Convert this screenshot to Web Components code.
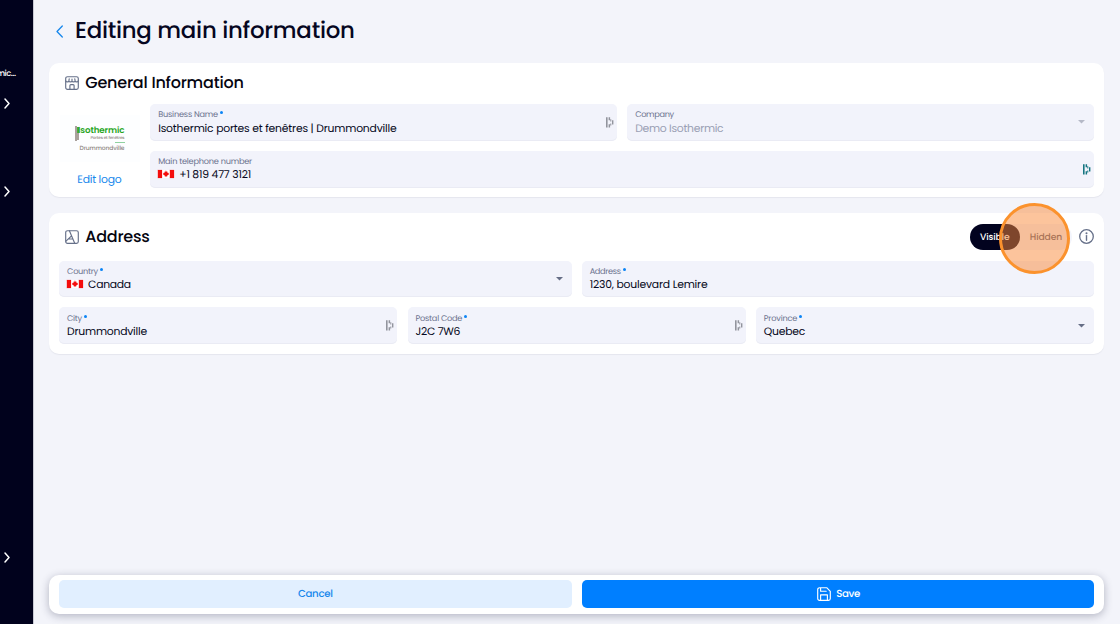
<!DOCTYPE html>
<html lang="en">
<head>
<meta charset="utf-8">
<title>Editing main information</title>
<style>
body{margin:0;width:1120px;height:624px;overflow:hidden;background:#f3f4fa;color:#050621;font-family:Poppins,Inter,"Noto Sans",sans-serif;text-rendering:geometricPrecision}
</style>
</head>
<body>
<app-shell></app-shell>
<script>
const define=(name,html,setup)=>customElements.define(name,class extends HTMLElement{
  connectedCallback(){
    if(this.shadowRoot)return;
    const t=document.createElement('template');
    t.innerHTML=typeof html==='function'?html(this):html;
    this.attachShadow({mode:'open'}).append(t.content.cloneNode(true));
    if(setup)setup(this);
  }
});
const attr=(el,n,d='')=>el.getAttribute(n)??d;

// Text line spaced so that it spans the given width.
define('ui-text',el=>`<style>:host{display:block;white-space:nowrap;font-size:${attr(el,'size')}px;line-height:${attr(el,'lh','14')}px;font-weight:${attr(el,'weight','400')};width:${attr(el,'w')}px}span{display:inline-block}</style><span><slot></slot></span>`,el=>{
  const s=el.shadowRoot.querySelector('span'),w=parseFloat(attr(el,'w')),n=el.textContent.length;
  s.style.letterSpacing=((w-s.getBoundingClientRect().width)/(n-1))+'px';
});

const icons={
 chevron:'<path d="M1 1l4 4.5L1 10" stroke-width="1.5"/>',
 back:'<path d="M6.3 1L1 6.5l5.3 5.5" stroke-width="1.3"/>',
 store:'<rect x=".7" y=".7" width="12.6" height="12.6" rx="1.8"/><path d="M.8 4.8c.3 1.5 2.8 1.5 3.1 0c.3 1.5 2.8 1.5 3.1 0c.3 1.5 2.8 1.5 3.1 0c.3 1.5 2.8 1.5 3.1 0M4.2 2.8l-.3 2M7 3v1.8M9.8 2.8l.3 2M4.9 13.2V9.6q0-1 1-1h2.2q1 0 1 1v3.6"/>',
 map:'<rect x=".7" y=".7" width="12.6" height="12.6" rx="1.8"/><path d="M4.4.8l5.3 12.4M6.5 5.8L1 11.2M7.9 9H3.5"/>',
 info:'<circle cx="7.5" cy="7.5" r="6.8" stroke-width="1.3"/><path d="M7.5 6.6v4.7" stroke-width="1.4"/><circle cx="7.5" cy="4.2" r=".45"/>',
 save:'<path d="M2.5.7h7.2l3.6 3.6v7.2a1.8 1.8 0 0 1-1.8 1.8h-9a1.8 1.8 0 0 1-1.8-1.8v-9A1.8 1.8 0 0 1 2.5.7zM3.6.8v3.4h5.6M3.6 13.2V7.8h6.8v5.4"/>',
 caret:'<path d="M0 0h7L3.5 3.6z" fill="currentColor" stroke="none"/>',
 dash:'<path d="M0 .3h1.6v10.2H0zM2.6 .3h1.5v2.9H2.6zM2.6 7.3h1.5v3.2H2.6zM4.3 2.2h1v2.2h-1zM4.3 6.4h1v2.2h-1zM6 3.3h1.4v4.2H6z" fill="currentColor" stroke="none"/>',
 flag:'<path d="M0 0h16v8H0z" fill="#fff" stroke="none"/><path d="M0 0h4v8H0zM12 0h4v8h-4zM8 .8l.7 1.3.8-.3-.2 1.3 1.5-.2-.4.9.6.4-1.9 1.4.1.6-1-.1V7h-.4v-.9l-1 .1.1-.6L5 4.2l.6-.4-.4-.9 1.5.2-.2-1.3.8.3z" fill="#f40d0d" stroke="#f40d0d" stroke-width=".2"/>'
};
define('ui-icon',el=>{const w=attr(el,'w'),h=attr(el,'h',w);return `<style>:host{display:block;flex:none;width:${w}px;height:${h}px}svg{display:block;overflow:visible}</style><svg width="${w}" height="${h}" viewBox="0 0 ${w} ${h}" fill="none" stroke="currentColor" stroke-width="1.15" stroke-linecap="round" stroke-linejoin="round">${icons[attr(el,'name')]}</svg>`});

define('ui-field',el=>{
 const end=attr(el,'end'),dis=el.hasAttribute('disabled');
 return `<style>
 :host{display:flex;align-items:center;box-sizing:border-box;height:36.6px;min-width:0;border-radius:5px;background:#f2f3fb;box-shadow:inset 0 -1px #eaebf4;padding:0 ${end==='caret'?8.8:3}px 0 7.8px}
 .body{flex:1;min-width:0;padding-bottom:1px}
 .label{display:flex;gap:2px;color:#6b728e;height:12.2px}
 .dot{width:3px;height:3px;border-radius:50%;background:#0b84f5;margin-top:3px}
 .value{display:flex;align-items:center;gap:5px;height:15px;color:${dis?'#9aa0b4':'#050721'}}
 .value ui-icon{margin-top:-1px}
 .end{color:${attr(el,'tone',end==='caret'?'#666e86':'#92949d')}}
 </style><div class="body"><div class="label"><ui-text size="8.2" lh="12" w="${attr(el,'lw')}">${attr(el,'label')}</ui-text>${el.hasAttribute('required')?'<i class="dot"></i>':''}</div>
 <div class="value">${el.hasAttribute('flag')?'<ui-icon name="flag" w="16" h="8"></ui-icon>':''}<ui-text size="10.8" lh="15" w="${attr(el,'vw')}">${attr(el,'value')}</ui-text></div></div>
 ${end?`<ui-icon class="end" name="${end}" w="${end==='caret'?7:8}" h="${end==='caret'?4:11}"></ui-icon>`:''}`});

define('ui-card',`<style>:host{display:block;box-sizing:border-box;background:#fff;border-radius:10px;padding:0 10.3px;box-shadow:0 1px 1px #e5e6ee}
 header{display:flex;align-items:center;box-sizing:border-box;height:var(--head,41.2px);padding:0 0 var(--lift,.4px) 6.2px;color:#667089}
 header ::slotted(ui-text){color:#050510;margin-left:5.8px}
 .tools{margin-left:auto}</style>
 <header><slot name="icon"></slot><slot name="title"></slot><div class="tools"><slot name="tools"></slot></div></header><slot></slot>`);

define('field-row',el=>`<style>:host{display:grid;grid-template-columns:repeat(${attr(el,'cols')},minmax(0,1fr));gap:10.3px}</style><slot></slot>`);

define('business-logo',`<style>:host{display:flex;flex-direction:column;align-items:center;width:80.5px}
 .pic{box-sizing:border-box;width:80px;height:47px;margin-top:10.5px;padding:11px 0 0 15px;background:#fdfeff;display:flex}
 .bars{width:4px;height:15px;display:grid;grid-template-columns:1fr 1fr;margin-right:-1px}.bars i{background:#a9a19c}.bars i+i{height:13px;margin-top:1px;background:linear-gradient(#49ac40 50%,#a9a19c 50%)}
 .words{width:47px;display:flex;flex-direction:column;align-items:flex-end}
 .name{color:#27a51e}.sub,.city{color:#8e8682}.rule{width:10px;height:1px;background:#8fd2a0;margin:.5px 0 3px}
 .edit{color:#1687ec;margin-top:10px}</style>
 <div class="pic"><div class="bars"><i></i><i></i></div><div class="words"><ui-text class="name" size="8.7" lh="10" weight="600" w="46.5">Isothermic</ui-text><ui-text class="sub" size="4.1" lh="6" w="34" weight="500">Portes et fenêtres</ui-text><i class="rule"></i><ui-text class="city" size="6" lh="7" weight="500" w="45">Drummondville</ui-text></div></div>
 <ui-text class="edit" size="10.8" lh="16" w="44.5">Edit logo</ui-text>`);

define('visibility-toggle',`<style>:host{display:flex;align-items:center;gap:7px;color:#667089}
 .pill{position:relative;display:flex;width:102.4px;height:26px;border-radius:13px;background:#f3f5fc}
 .on,.off{box-sizing:border-box;height:26px;padding-top:2px;display:flex;align-items:center;justify-content:center}
 .on{width:50.5px;border-radius:13px;background:#02031f;color:#fff}.off{width:52.5px;color:#565d77}
 .click{position:absolute;left:29px;top:-21px;box-sizing:border-box;width:71px;height:71px;border:3px solid #fb922d;border-radius:50%;background:rgba(249,137,57,.5);z-index:2}</style>
 <div class="pill"><div class="on"><ui-text size="9.2" w="29.5" weight="500">Visible</ui-text></div><div class="off"><ui-text size="9.2" w="32.5" weight="500">Hidden</ui-text></div><i class="click"></i></div><ui-icon name="info" w="15"></ui-icon>`);

define('side-bar',`<style>:host{display:flex;flex-direction:column;box-sizing:border-box;width:33px;height:624px;background:#01021d;color:#fff;overflow:hidden;padding-top:67px;box-shadow:1px 0 #c9cad3}
 ui-icon{margin-left:3.7px}ui-text{margin-left:-3.6px}.a{margin-top:19px}.b{margin-top:77px}.c{margin-top:355px}</style>
 <ui-text size="8.3" lh="12" w="19.6" weight="500">mic…</ui-text><ui-icon class="a" name="chevron" w="6" h="11"></ui-icon><ui-icon class="b" name="chevron" w="6" h="11"></ui-icon><ui-icon class="c" name="chevron" w="6" h="11"></ui-icon>`);

define('action-bar',`<style>:host{display:grid;grid-template-columns:1fr 1fr;gap:10.3px;box-sizing:border-box;height:39px;padding:5.2px 10.3px;border-radius:10px;background:#fff;box-shadow:0 2px 9px rgba(40,42,75,.32)}
 div{display:flex;align-items:center;justify-content:center;gap:5.5px;border-radius:5px}
 .cancel{background:#e1efff;color:#1687ec}.save{background:#007fff;color:#fff;padding-left:1px}</style>
 <div class="cancel"><ui-text size="10.2" w="35" weight="500">Cancel</ui-text></div><div class="save"><ui-icon name="save" w="14"></ui-icon><ui-text size="10.2" w="24" weight="500">Save</ui-text></div>`);

define('app-shell',`<style>:host{display:flex;width:1120px;height:624px}
 main{flex:1;display:flex;flex-direction:column;box-sizing:border-box;padding:0 15.6px 10.4px 16px}
 .head{display:flex;align-items:center;gap:12.4px;height:63px;box-sizing:border-box;padding:0 0 .6px 6.5px}.head ui-icon{color:#1687ec}
 .one{height:134px}.two{height:141px;margin-top:16px;--head:47.5px;--lift:0px}
 .general{display:flex;gap:10.6px}.fields{flex:1;min-width:0}
 .stack{display:grid;gap:10.3px;align-content:start}
 action-bar{margin-top:auto}</style>
 <side-bar></side-bar><main>
 <div class="head"><ui-icon name="back" w="7" h="13"></ui-icon><ui-text size="22.9" lh="32" w="280" weight="500">Editing main information</ui-text></div>
 <ui-card class="one"><ui-icon slot="icon" name="store" w="14"></ui-icon><ui-text slot="title" size="16" lh="22" w="158.5" weight="500">General Information</ui-text>
  <div class="general"><business-logo></business-logo><div class="fields stack">
   <field-row cols="2"><ui-field label="Business Name" lw="60" required value="Isothermic portes et fenêtres | Drummondville" vw="238.5" end="dash"></ui-field><ui-field label="Company" lw="39" value="Demo Isothermic" vw="88.5" end="caret" tone="#b5b9c7" disabled></ui-field></field-row>
   <field-row cols="1"><ui-field label="Main telephone number" lw="94" flag value="+1 819 477 3121" vw="72" end="dash" tone="#167681"></ui-field></field-row>
  </div></div></ui-card>
 <ui-card class="two"><ui-icon slot="icon" name="map" w="14"></ui-icon><ui-text slot="title" size="16" lh="22" w="64.5" weight="500">Address</ui-text><visibility-toggle slot="tools"></visibility-toggle>
  <div class="stack"><field-row cols="2"><ui-field label="Country" lw="31" required flag value="Canada" vw="43" end="caret"></ui-field><ui-field label="Address" lw="31.5" required value="1230, boulevard Lemire" vw="118"></ui-field></field-row>
  <field-row cols="3"><ui-field label="City" lw="15" required value="Drummondville" vw="80" end="dash"></ui-field><ui-field label="Postal Code" lw="47" required value="J2C 7W6" vw="45" end="dash"></ui-field><ui-field label="Province" lw="33.5" required value="Quebec" vw="41.5" end="caret"></ui-field></field-row></div></ui-card>
 <action-bar></action-bar></main>`);
</script>
</body>
</html>
